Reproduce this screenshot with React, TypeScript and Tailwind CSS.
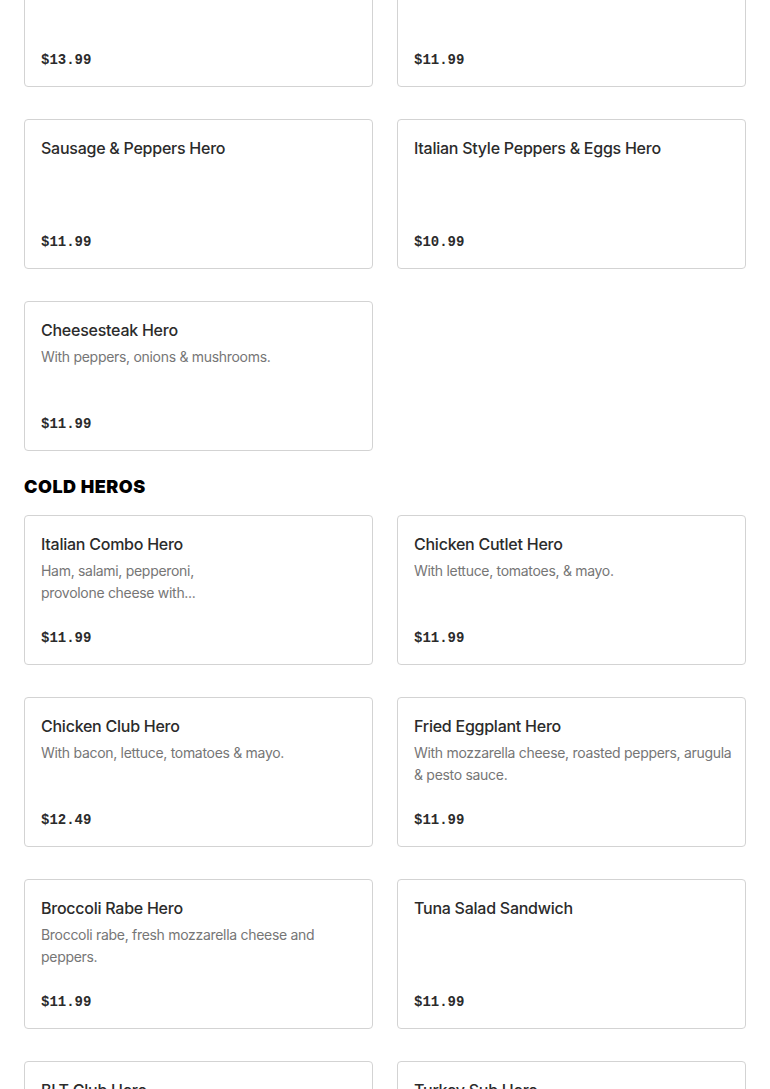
type Item = { name: string; desc?: string; price: string };

const hotHeros: Item[] = [
  { name: 'Meatball Parmigiana Hero', price: '$13.99' },
  { name: 'Sausage Parmigiana Hero', price: '$11.99' },
  { name: 'Sausage & Peppers Hero', price: '$11.99' },
  { name: 'Italian Style Peppers & Eggs Hero', price: '$10.99' },
  { name: 'Cheesesteak Hero', desc: 'With peppers, onions & mushrooms.', price: '$11.99' },
];

const coldHeros: Item[] = [
  { name: 'Italian Combo Hero', desc: 'Ham, salami, pepperoni,\nprovolone cheese with...', price: '$11.99' },
  { name: 'Chicken Cutlet Hero', desc: 'With lettuce, tomatoes, & mayo.', price: '$11.99' },
  { name: 'Chicken Club Hero', desc: 'With bacon, lettuce, tomatoes & mayo.', price: '$12.49' },
  { name: 'Fried Eggplant Hero', desc: 'With mozzarella cheese, roasted peppers, arugula & pesto sauce.', price: '$11.99' },
  { name: 'Broccoli Rabe Hero', desc: 'Broccoli rabe, fresh mozzarella cheese and peppers.', price: '$11.99' },
  { name: 'Tuna Salad Sandwich', price: '$11.99' },
  { name: 'BLT Club Hero', desc: 'With bacon, lettuce, tomatoes & mayo.', price: '$11.99' },
  { name: 'Turkey Sub Hero', desc: 'With lettuce, tomatoes & mayo.', price: '$11.99' },
];

function MenuCard({ item }: { item: Item }) {
  return (
    <div className="h-[150px] rounded-[4px] border border-[#d3d3d3] bg-white pl-4 pr-3 pt-4 pb-4 flex flex-col">
      <div className="text-[16px] leading-6 font-medium text-[#2b2b2b] tracking-[-0.25px]">{item.name}</div>
      {item.desc && (
        <div className="mt-1 text-[14px] leading-[22px] text-[#767676] whitespace-pre-line line-clamp-2 tracking-[-0.3px]">
          {item.desc}
        </div>
      )}
      <div
        className="mt-auto text-[14px] leading-5 font-bold text-[#2b2b2b]"
        style={{ fontFamily: '"Liberation Mono", "DejaVu Sans Mono", monospace' }}
      >
        {item.price}
      </div>
    </div>
  );
}

export default function App() {
  return (
    <div className="min-h-screen bg-white overflow-hidden" style={{ fontFamily: 'Inter, "Noto Sans", sans-serif' }}>
      <div className="-mt-[63px] px-6">
        {/* ── HOT HEROS ───────────── */}
        <div className="grid grid-cols-2 gap-x-6 gap-y-8">
          {hotHeros.map((it) => (
            <MenuCard key={it.name} item={it} />
          ))}
        </div>

        {/* ── COLD HEROS ──────────── */}
        <h2 className="mt-6 mb-4 text-[18px] leading-6 font-black text-black tracking-[0.5px]">COLD HEROS</h2>
        <div className="grid grid-cols-2 gap-x-6 gap-y-8">
          {coldHeros.map((it) => (
            <MenuCard key={it.name} item={it} />
          ))}
        </div>
      </div>
    </div>
  );
}
